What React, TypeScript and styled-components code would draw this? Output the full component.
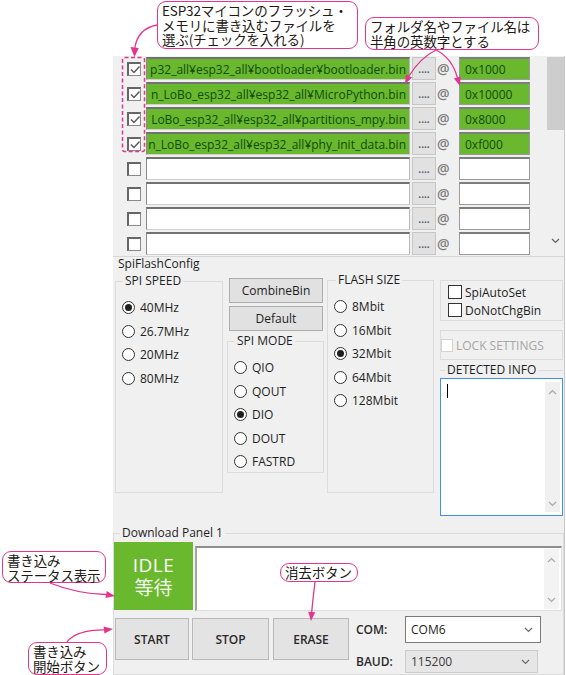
import React from 'react';
import styled, { createGlobalStyle } from 'styled-components';

const UI_FONT = `"Open Sans", "Noto Sans CJK JP", sans-serif`;
const JP_FONT = `"Noto Sans CJK JP", "Noto Sans", sans-serif`;

const COLOR = {
  WINDOW: '#f0f0f0',
  GREEN: '#6ab82e',
  GREEN_TEXT: '#0f4d10',
  PINK: '#e2358d',
  INK: '#231815',
  LINE: '#dcdcdc',
  BUTTON: '#e1e1e1',
  BUTTON_BORDER: '#adadad',
  TEXT: '#1e1e1e',
};

// パスは欄の右端に寄せて表示（左側は欄からはみ出して見えない）
const FILES = [
  { path: 'p32_all¥esp32_all¥bootloader¥bootloader.bin', offset: '0x1000', on: true },
  { path: 'n_LoBo_esp32_all¥esp32_all¥MicroPython.bin', offset: '0x10000', on: true },
  { path: 'LoBo_esp32_all¥esp32_all¥partitions_mpy.bin', offset: '0x8000', on: true },
  { path: 'n_LoBo_esp32_all¥esp32_all¥phy_init_data.bin', offset: '0xf000', on: true },
  { path: '', offset: '', on: false },
  { path: '', offset: '', on: false },
  { path: '', offset: '', on: false },
  { path: '', offset: '', on: false },
];

const SPEEDS = ['40MHz', '26.7MHz', '20MHz', '80MHz'];
const MODES = ['QIO', 'QOUT', 'DIO', 'DOUT', 'FASTRD'];
const SIZES = ['8Mbit', '16Mbit', '32Mbit', '64Mbit', '128Mbit'];

function Chevron({ up }: { up?: boolean }) {
  return (
    <svg width="9" height="6" viewBox="0 0 9 6">
      <polyline
        points={up ? '1,5 4.5,1.5 8,5' : '1,1 4.5,4.5 8,1'}
        fill="none"
        stroke="#a9a9a9"
        strokeWidth="1.2"
      />
    </svg>
  );
}

function CheckMark() {
  return (
    <svg width="10" height="9" viewBox="0 0 10 9">
      <polyline points="1,4.5 4,7.5 9.5,1.5" fill="none" stroke="#5a5a5a" strokeWidth="1.5" />
    </svg>
  );
}

function Radio({ label, checked }: { label: string; checked?: boolean }) {
  return (
    <RadioRow>
      <RadioCircle>{checked && <RadioDot />}</RadioCircle>
      <span>{label}</span>
    </RadioRow>
  );
}

function App() {
  return (
    <Page>
      <GlobalStyle />
      <AppWindow>
        <FileList>
          <FileRows>
            {FILES.map((f, i) => (
              <FileRow key={i}>
                <CheckCell>
                  <ListCheck>{f.on && <CheckMark />}</ListCheck>
                </CheckCell>
                <PathField $filled={f.on}>
                  <span>{f.path}</span>
                </PathField>
                <BrowseButton>....</BrowseButton>
                <AtMark>@</AtMark>
                <OffsetField $filled={f.on}>{f.offset}</OffsetField>
              </FileRow>
            ))}
          </FileRows>
          <ListScroll>
            <ListThumb />
            <ListArrow>
              <Chevron />
            </ListArrow>
          </ListScroll>
        </FileList>

        <SectionTitle>SpiFlashConfig</SectionTitle>
        <ConfigRow>
          <Group $w={108} $h={219} $top={1}>
            <GroupLabel $indent={1}>SPI SPEED</GroupLabel>
            {SPEEDS.map((s) => (
              <Radio key={s} label={s} checked={s === '40MHz'} />
            ))}
          </Group>

          <MiddleColumn>
            <PlainButton>CombineBin</PlainButton>
            <PlainButton>Default</PlainButton>
            <Group $w={97} $h={139} $top={3}>
              <GroupLabel $indent={1}>SPI MODE</GroupLabel>
              {MODES.map((m) => (
                <Radio key={m} label={m} checked={m === 'DIO'} />
              ))}
            </Group>
          </MiddleColumn>

          <Group $w={107} $h={220} $top={0} $left={3}>
            <GroupLabel $indent={2}>FLASH SIZE</GroupLabel>
            {SIZES.map((s) => (
              <Radio key={s} label={s} checked={s === '32Mbit'} />
            ))}
          </Group>

          <RightColumn>
            <OptionBox>
              <OptionRow>
                <UiCheck />
                SpiAutoSet
              </OptionRow>
              <OptionRow>
                <UiCheck />
                DoNotChgBin
              </OptionRow>
            </OptionBox>
            <LockBox>
              <LockCheck />
              LOCK SETTINGS
            </LockBox>
            <InfoGroup>
              <GroupLabel $indent={5}>DETECTED INFO</GroupLabel>
              <InfoArea>
                <InfoText>
                  <Caret />
                </InfoText>
                <InnerScroll>
                  <Chevron up />
                  <Chevron />
                </InnerScroll>
              </InfoArea>
            </InfoGroup>
          </RightColumn>
        </ConfigRow>

        <DownloadPanel>
          <GroupLabel $indent={6}>Download Panel 1</GroupLabel>
          <StatusRow>
            <IdleBox>
              <IdleWord>IDLE</IdleWord>
              <IdleKanji>等待</IdleKanji>
            </IdleBox>
            <LogArea>
              <LogScroll>
                <Chevron up />
                <Chevron />
              </LogScroll>
            </LogArea>
          </StatusRow>
          <ControlRow>
            <ActionButton $w={74} $left={1}>START</ActionButton>
            <ActionButton $w={77} $left={3}>STOP</ActionButton>
            <ActionButton $w={76} $left={4}>ERASE</ActionButton>
            <PortGrid>
              <PortLabel>COM:</PortLabel>
              <SelectBox $w={136} $h={27}>
                COM6
                <Chevron />
              </SelectBox>
              <PortLabel>BAUD:</PortLabel>
              <SelectBox $w={133} $h={23} $disabled>
                115200
                <Chevron />
              </SelectBox>
            </PortGrid>
          </ControlRow>
        </DownloadPanel>
      </AppWindow>

      <Annotations width="566" height="675" viewBox="0 0 566 675">
        <rect x="122.5" y="57.5" width="22" height="94" rx="2" fill="none" stroke={COLOR.PINK} strokeWidth="1.5" strokeDasharray="4 2.5" />
        <g fill="none" stroke={COLOR.PINK} strokeWidth="1.3">
          <path d="M157 25 C146 27 137 34 134.8 48" />
          <path d="M436 50 Q420 58 409 76" />
          <path d="M436 50 Q452 58 457.3 77.4" />
          <path d="M50 583 Q78 594 106.1 594.5" />
          <path d="M315 582 Q313 598 311.7 612" />
          <path d="M67 642 Q76 630 104 629.9" />
        </g>
        <g fill={COLOR.PINK}>
          <polygon points="134.5,57 130.5,47 138.8,48" />
          <polygon points="405,84 412.1,77.6 405.9,74.4" />
          <polygon points="460,86 460.6,76.3 454,78.5" />
          <polygon points="115,596 105.5,598 106.7,591" />
          <polygon points="311,621 315.2,612.3 308.2,611.7" />
          <polygon points="113,629 104.4,633.4 103.6,626.4" />
        </g>
      </Annotations>

      <Callout $x={157} $y={1} $w={201} $h={48}>
        ESP32マイコンのフラッシュ・
        <br />
        メモリに書き込むファイルを
        <br />
        選ぶ(チェックを入れる)
      </Callout>
      <Callout $x={365} $y={17} $w={174} $h={33}>
        フォルダ名やファイル名は
        <br />
        半角の英数字とする
      </Callout>
      <Callout $x={2} $y={551} $w={104} $h={32}>
        書き込み
        <br />
        ステータス表示
      </Callout>
      <Callout $x={280} $y={563} $w={78} $h={19}>
        消去ボタン
      </Callout>
      <Callout $x={28} $y={642} $w={79} $h={33}>
        書き込み
        <br />
        開始ボタン
      </Callout>
    </Page>
  );
}

export default App;

const GlobalStyle = createGlobalStyle`
  html, body {
    margin: 0;
    padding: 0;
    background: #ffffff;
  }
  body {
    font-family: ${UI_FONT};
    font-size: 12px;
    color: ${COLOR.TEXT};
  }
  * {
    box-sizing: border-box;
  }
`;

const Page = styled.div`
  position: relative;
  width: 566px;
  height: 675px;
  overflow: hidden;
  padding: 56px 0 0 113px;
`;

const AppWindow = styled.div`
  display: flex;
  flex-direction: column;
  width: 452px;
  height: 619px;
  background: ${COLOR.WINDOW};
  border-right: 1px solid #c8c8c8;
`;

/* file list */

const FileList = styled.div`
  display: flex;
  height: 201px;
  padding-top: 1px;
  border-bottom: 1px solid #d6d6d6;
`;

const FileRows = styled.div`
  display: flex;
  flex-direction: column;
  gap: 2px;
  width: 432px;
`;

const FileRow = styled.div`
  display: flex;
  align-items: center;
  height: 23px;
`;

const CheckCell = styled.div`
  display: flex;
  align-items: center;
  width: 33px;
  padding-left: 14px;
`;

const ListCheck = styled.div`
  display: flex;
  align-items: center;
  justify-content: center;
  width: 14px;
  height: 14px;
  background: #ffffff;
  border: 1px solid #8a8a8a;
  border-top: 2px solid #666666;
  border-left: 2px solid #666666;
`;

const PathField = styled.div<{ $filled: boolean }>`
  display: flex;
  justify-content: flex-end;
  align-items: center;
  width: 264px;
  height: 23px;
  padding: 0 3px 0 1px;
  overflow: hidden;
  white-space: nowrap;
  background: ${(p) => (p.$filled ? COLOR.GREEN : '#ffffff')};
  color: ${COLOR.GREEN_TEXT};
  border-top: 2px solid #727272;
  border-left: 1px solid #8a8a8a;
  border-right: 1px solid #b8b8b8;
  border-bottom: 1px solid #cfcfcf;
  span {
    flex-shrink: 0;
  }
`;

const BrowseButton = styled.div`
  display: flex;
  align-items: flex-end;
  justify-content: center;
  width: 24px;
  height: 23px;
  margin-left: 2px;
  padding-bottom: 5px;
  background: ${COLOR.BUTTON};
  border: 1px solid #c6c6c6;
  font-size: 10px;
  font-weight: 700;
  line-height: 10px;
  letter-spacing: 0;
  color: #56606e;
`;

const AtMark = styled.div`
  width: 23px;
  padding-left: 1px;
  font-size: 14px;
  font-weight: 600;
  color: #7c7c7c;
`;

const OffsetField = styled.div<{ $filled: boolean }>`
  display: flex;
  align-items: center;
  width: 71px;
  height: 23px;
  padding-left: 5px;
  background: ${(p) => (p.$filled ? COLOR.GREEN : '#ffffff')};
  color: ${COLOR.GREEN_TEXT};
  border: 1px solid #9a9a9a;
  border-top: 2px solid #7e7e7e;
`;

const ListScroll = styled.div`
  display: flex;
  flex-direction: column;
  justify-content: space-between;
  align-items: center;
  width: 18px;
  margin-left: 15px;
  background: #f0f0f0;
`;

const ListThumb = styled.div`
  align-self: stretch;
  height: 73px;
  background: #cdcdcd;
`;

const ListArrow = styled.div`
  padding-bottom: 8px;
  svg polyline {
    stroke: #606060;
  }
`;

/* spi flash config */

const SectionTitle = styled.div`
  height: 14px;
  padding-left: 5px;
  line-height: 14px;
`;

const ConfigRow = styled.div`
  display: flex;
  align-items: flex-start;
  margin-top: 2px;
`;

const Group = styled.fieldset<{ $w: number; $h: number; $top: number; $left?: number }>`
  width: ${(p) => p.$w}px;
  height: ${(p) => p.$h}px;
  min-width: 0;
  margin: ${(p) => p.$top}px 0 0 ${(p) => p.$left ?? 2}px;
  padding: 8px 0 0 6px;
  border: 1px solid ${COLOR.LINE};
`;

const GroupLabel = styled.legend<{ $indent: number }>`
  margin-left: ${(p) => p.$indent}px;
  padding: 0 2px;
  line-height: 14px;
  font-size: 12px;
  color: ${COLOR.TEXT};
`;

const RadioRow = styled.div`
  display: flex;
  align-items: center;
  gap: 5px;
  height: 23.5px;
`;

const RadioCircle = styled.div`
  display: flex;
  align-items: center;
  justify-content: center;
  width: 13px;
  height: 13px;
  border: 1px solid #333333;
  border-radius: 50%;
  background: #ffffff;
`;

const RadioDot = styled.div`
  width: 7px;
  height: 7px;
  border-radius: 50%;
  background: #1f1f1f;
`;

const MiddleColumn = styled.div`
  display: flex;
  flex-direction: column;
  width: 97px;
  margin-left: 4px;

  & > fieldset {
    margin-left: 0;
  }
`;

const PlainButton = styled.div`
  display: flex;
  align-items: center;
  justify-content: center;
  width: 94px;
  height: 25px;
  margin: 3px 0 0 2px;
  background: ${COLOR.BUTTON};
  border: 1px solid ${COLOR.BUTTON_BORDER};

  &:first-child {
    margin-top: 5px;
  }
`;

const RightColumn = styled.div`
  display: flex;
  flex-direction: column;
  width: 123px;
  margin: 7px 0 0 6px;
`;

const OptionBox = styled.div`
  height: 41px;
  padding: 2px 0 0 7px;
  border: 1px solid ${COLOR.LINE};
`;

const OptionRow = styled.div`
  display: flex;
  align-items: center;
  gap: 3px;
  height: 18px;
`;

const UiCheck = styled.div`
  width: 14px;
  height: 14px;
  background: #ffffff;
  border: 1px solid #333333;
`;

const LockBox = styled.div`
  display: flex;
  align-items: center;
  gap: 3px;
  height: 30px;
  margin-top: 9px;
  border: 1px solid ${COLOR.LINE};
  color: #a6a6a6;
`;

const LockCheck = styled.div`
  width: 12px;
  height: 13px;
  background: #ffffff;
  border: 1px solid #d4d4d4;
`;

const InfoGroup = styled.fieldset`
  min-width: 0;
  margin: 3px 0 0 0;
  padding: 1px 0 0 0;
  border: none;
  border-top: 1px solid ${COLOR.LINE};
`;

const InfoArea = styled.div`
  display: flex;
  width: 123px;
  height: 138px;
  background: #ffffff;
  border: 1px solid #4191e0;
`;

const InfoText = styled.div`
  flex: 1;
  padding: 5px 0 0 6px;
`;

const Caret = styled.div`
  width: 1px;
  height: 14px;
  background: #000000;
`;

const InnerScroll = styled.div`
  display: flex;
  flex-direction: column;
  justify-content: space-between;
  align-items: center;
  width: 15px;
  margin: 3px 2px 3px 0;
  padding: 7px 0 5px;
  background: #f0f0f0;
`;

/* download panel */

const DownloadPanel = styled.fieldset`
  min-width: 0;
  margin: 10px 0 0 0;
  padding: 2px 0 0 0;
  border: 1px solid ${COLOR.LINE};
  flex: 1;
`;

const StatusRow = styled.div`
  display: flex;
  align-items: flex-start;
`;

const IdleBox = styled.div`
  display: flex;
  flex-direction: column;
  align-items: center;
  justify-content: center;
  width: 79px;
  height: 68px;
  background: ${COLOR.GREEN};
  color: #ffffff;
`;

const IdleWord = styled.div`
  font-size: 19px;
  line-height: 22px;
  letter-spacing: 0.5px;
`;

const IdleKanji = styled.div`
  font-family: ${JP_FONT};
  font-size: 19px;
  line-height: 22px;
  color: #f2f7ee;
`;

const LogArea = styled.div`
  display: flex;
  justify-content: flex-end;
  width: 367px;
  height: 65px;
  margin: 4px 0 0 2px;
  background: #ffffff;
  border-top: 2px solid #8e8e8e;
  border-left: 2px solid #a4a4a4;
  border-right: 1px solid #dddddd;
  border-bottom: 1px solid #dddddd;
`;

const LogScroll = styled.div`
  display: flex;
  flex-direction: column;
  justify-content: space-between;
  align-items: center;
  width: 15px;
  margin: 1px 2px 1px 0;
  padding: 8px 0 6px;
  background: #f3f3f3;
`;

const ControlRow = styled.div`
  display: flex;
  align-items: flex-start;
  margin-top: 5px;
`;

const ActionButton = styled.div<{ $w: number; $left: number }>`
  display: flex;
  align-items: center;
  justify-content: center;
  width: ${(p) => p.$w}px;
  height: 42px;
  margin: 2px 0 0 ${(p) => p.$left}px;
  background: #e3e3e3;
  border: 1px solid #b9b9b9;
  font-weight: 600;
  color: #2a2a2a;
`;

const PortGrid = styled.div`
  display: grid;
  grid-template-columns: 49px auto;
  row-gap: 7px;
  align-items: center;
  margin-left: 7px;
`;

const PortLabel = styled.div`
  font-weight: 600;
  color: #2a2a2a;
`;

const SelectBox = styled.div<{ $w: number; $h: number; $disabled?: boolean }>`
  display: flex;
  align-items: center;
  justify-content: space-between;
  width: ${(p) => p.$w}px;
  height: ${(p) => p.$h}px;
  padding: 0 7px 0 5px;
  background: ${(p) => (p.$disabled ? '#e6e6e6' : '#ffffff')};
  border: 1px solid ${(p) => (p.$disabled ? '#cccccc' : '#7a7a7a')};
  color: ${(p) => (p.$disabled ? '#3a3a3a' : '#1e1e1e')};

  svg polyline {
    stroke: #6a6a6a;
  }
`;

/* annotations */

const Annotations = styled.svg`
  position: absolute;
  left: 0;
  top: 0;
  pointer-events: none;
`;

const Callout = styled.div<{ $x: number; $y: number; $w: number; $h: number }>`
  position: absolute;
  left: ${(p) => p.$x}px;
  top: ${(p) => p.$y}px;
  width: ${(p) => p.$w}px;
  height: ${(p) => p.$h}px;
  padding: 1px 0 0 4px;
  background: #ffffff;
  border: 1.5px solid ${COLOR.PINK};
  border-radius: 9px;
  font-family: ${JP_FONT};
  font-size: 13.5px;
  line-height: 14.5px;
  letter-spacing: -0.15px;
  color: ${COLOR.INK};
  white-space: nowrap;
`;
